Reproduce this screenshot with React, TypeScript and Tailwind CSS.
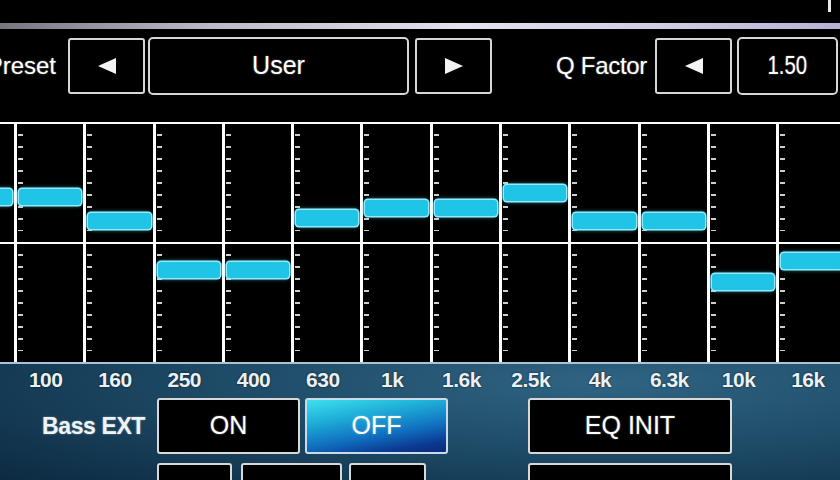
import React from "react";

// 13 graphic-EQ bands; `y` is the knob centre in px from the top of the fader track
const BANDS = [
  { label: "63", y: 73 },
  { label: "100", y: 73 },
  { label: "160", y: 97 },
  { label: "250", y: 146 },
  { label: "400", y: 146 },
  { label: "630", y: 94 },
  { label: "1k", y: 84 },
  { label: "1.6k", y: 84 },
  { label: "2.5k", y: 69 },
  { label: "4k", y: 97 },
  { label: "6.3k", y: 97 },
  { label: "10k", y: 158 },
  { label: "16k", y: 137 },
];

const TICKS = Array.from({ length: 9 });

const glow = "[text-shadow:0_0_2px_rgba(255,255,255,0.45)]";

function Arrow({ dir }: { dir: "left" | "right" }) {
  return (
    <svg width="20" height="18" viewBox="0 0 20 18">
      {dir === "left" ? (
        <polygon points="19,1 19,17 1,9" fill="#f4f4f4" />
      ) : (
        <polygon points="1,1 1,17 19,9" fill="#f4f4f4" />
      )}
    </svg>
  );
}

function TickHalf({ className }: { className: string }) {
  return (
    <div className={`flex flex-col justify-evenly ${className}`}>
      {TICKS.map((_, i) => (
        <div key={i} className="ml-[1px] h-[1.5px] w-[5px] bg-[#cfcfcf]" />
      ))}
    </div>
  );
}

function Fader({ y }: { y: number }) {
  return (
    <div className="relative flex flex-col border-l-[3px] border-white">
      <TickHalf className="h-[120px] shrink-0 border-b-2 border-white" />
      <TickHalf className="flex-1" />
      <div
        className="absolute left-[2px] right-[2px] h-[16px] rounded-[3px] bg-[#1fc4e6] shadow-[0_0_0_1.5px_#93eafb,0_0_5px_#56d8f4]"
        style={{ top: y - 8 }}
      />
    </div>
  );
}

export default function App() {
  return (
    <div className="flex h-[480px] w-[840px] flex-col overflow-hidden bg-black font-['Liberation_Sans',Arial,sans-serif] text-white">
      {/* status strip */}
      <div className="flex h-[23px] shrink-0 justify-end pr-[9px]">
        <div className="h-[12px] w-[3px] bg-[#e8e8e8]" />
      </div>
      <div className="h-[6px] shrink-0 bg-[linear-gradient(to_right,#76767f,#bdbac8_25%,#e4e1ef_55%,#cfc9e2_80%,#b9b1d4)]" />

      {/* preset / Q factor row */}
      <div className="mt-[8px] flex h-[57px] shrink-0 items-center">
        <div className="flex h-full w-[68px] items-center justify-end overflow-hidden pr-[12px]">
          <span className={`whitespace-nowrap text-[24px] ${glow}`}>Preset</span>
        </div>
        <button className="flex h-[56px] w-[77px] items-center justify-center rounded-[3px] border-2 border-[#d6d6d6]">
          <Arrow dir="left" />
        </button>
        <div className={`ml-[3px] flex h-[58px] w-[261px] items-center justify-center rounded-[5px] border-2 border-[#d6d6d6] text-[25px] ${glow}`}>
          User
        </div>
        <button className="ml-[6px] flex h-[56px] w-[77px] items-center justify-center rounded-[3px] border-2 border-[#d6d6d6]">
          <Arrow dir="right" />
        </button>
        <div className={`flex w-[163px] justify-end pr-[8px] text-[24px] tracking-[-0.3px] ${glow}`}>
          Q Factor
        </div>
        <button className="flex h-[56px] w-[77px] items-center justify-center rounded-[3px] border-2 border-[#d6d6d6]">
          <Arrow dir="left" />
        </button>
        <div className="ml-[5px] flex h-[58px] w-[101px] items-center justify-center rounded-[5px] border-2 border-[#d6d6d6]">
          <span className={`inline-block scale-x-[0.78] text-[26px] ${glow}`}>1.50</span>
        </div>
      </div>

      {/* fader bank */}
      <div className="mt-[28px] h-[242px] shrink-0 border-t-2 border-b-2 border-t-white border-b-[#a9c3d6]">
        <div className="ml-[-55.3px] grid h-full grid-cols-[repeat(13,69.3px)]">
          {BANDS.map((b) => (
            <Fader key={b.label} y={b.y} />
          ))}
        </div>
      </div>

      <div className="h-[120px] shrink-0 bg-[radial-gradient(120%_150%_at_72%_15%,#2f6482_0%,#1e4b67_38%,#103149_72%,#081b2b_100%)]">
        {/* band frequencies */}
        <div className="ml-[-55.3px] grid h-[32px] grid-cols-[repeat(13,69.3px)]">
          {BANDS.map((b) => (
            <div
              key={b.label}
              className="flex items-center justify-center pr-[6px] text-[21px] font-bold tracking-[-0.5px] text-[#e9f0f6] [text-shadow:0_0_2px_rgba(0,0,0,0.8)]"
            >
              {b.label}
            </div>
          ))}
        </div>

        {/* bass extension / EQ init */}
        <div className="mt-[2px] flex h-[56px] items-center">
          <div className={`w-[157px] pr-[12px] text-right text-[23px] font-bold tracking-[-0.4px] text-[#eef3f7] ${glow}`}>
            Bass EXT
          </div>
          <button className={`flex h-[56px] w-[143px] items-center justify-center rounded-[3px] border-2 border-[#d8d8d8] bg-black text-[25px] ${glow}`}>
            ON
          </button>
          <button className={`ml-[5px] flex h-[56px] w-[143px] items-center justify-center rounded-[3px] border-2 border-[#c9dbe8] bg-[linear-gradient(170deg,#3fe0f0_0%,#1fb0d8_30%,#1070c0_62%,#0b3a92_85%,#0a2a78_100%)] text-[25px] ${glow}`}>
            OFF
          </button>
          <button className={`ml-[80px] flex h-[56px] w-[204px] items-center justify-center rounded-[3px] border-2 border-[#d8d8d8] bg-black text-[25px] ${glow}`}>
            EQ INIT
          </button>
        </div>

        <div className="mt-[9px] flex h-[56px] items-start">
          <div className={`w-[157px] pt-[11px] pr-[12px] text-right text-[23px] font-bold tracking-[-0.4px] text-[#eef3f7] ${glow}`}>
            SW Level
          </div>
          <div className="h-[56px] w-[75px] rounded-[3px] border-2 border-[#d8d8d8] bg-black" />
          <div className="ml-[9px] h-[56px] w-[101px] rounded-[3px] border-2 border-[#d8d8d8] bg-black" />
          <div className="ml-[7px] h-[56px] w-[77px] rounded-[3px] border-2 border-[#d8d8d8] bg-black" />
          <div className={`ml-[102px] flex h-[56px] w-[204px] items-start justify-center rounded-[3px] border-2 border-[#d8d8d8] bg-black pt-[10px] text-[25px] ${glow}`}>
            Loudness
          </div>
        </div>
      </div>
    </div>
  );
}
